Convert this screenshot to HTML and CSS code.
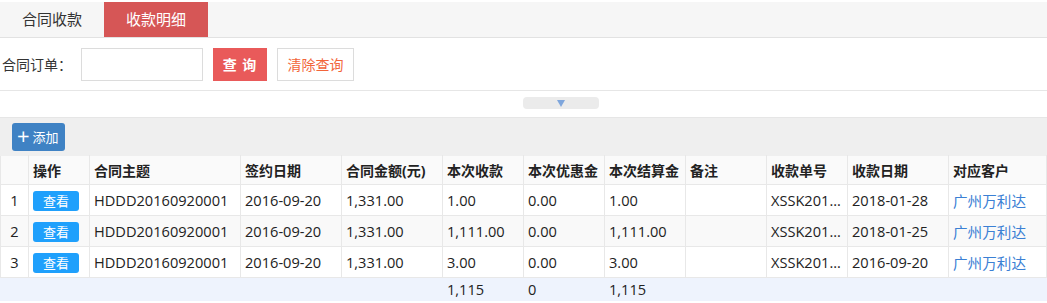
FILE: index.html
```html
<!DOCTYPE html>
<html lang="zh-CN">
<head>
  <meta charset="UTF-8">
  <title>收款明细</title>
  <link rel="stylesheet" href="styles.css">
</head>
<body>
  <div class="tabs">
    <span class="tab">合同收款</span>
    <span class="tab active">收款明细</span>
  </div>

  <div class="search">
    <label class="search-label">合同订单：</label>
    <input class="search-input" type="text">
    <button class="btn-query">查 询</button>
    <button class="btn-clear">清除查询</button>
  </div>

  <div class="collapse">
    <span class="collapse-handle"><span class="arrow"></span></span>
  </div>

  <div class="toolbar">
    <button class="btn-add"><span class="plus">+</span>添加</button>
  </div>

  <table class="grid">
    <colgroup>
      <col style="width:28px"><col style="width:61px"><col style="width:151px"><col style="width:101px">
      <col style="width:101px"><col style="width:81px"><col style="width:81px"><col style="width:81px">
      <col style="width:81px"><col style="width:81px"><col style="width:101px"><col>
    </colgroup>
    <thead>
      <tr>
        <th></th><th>操作</th><th>合同主题</th><th>签约日期</th><th>合同金额(元)</th><th>本次收款</th>
        <th>本次优惠金</th><th>本次结算金</th><th>备注</th><th>收款单号</th><th>收款日期</th><th>对应客户</th>
      </tr>
    </thead>
    <tbody>
      <tr>
        <td class="num">1</td><td><span class="btn-view">查看</span></td><td>HDDD20160920001</td><td>2016-09-20</td>
        <td>1,331.00</td><td>1.00</td><td>0.00</td><td>1.00</td><td></td><td>XSSK201...</td><td>2018-01-28</td>
        <td><a class="link" href="#">广州万利达</a></td>
      </tr>
      <tr class="alt">
        <td class="num">2</td><td><span class="btn-view">查看</span></td><td>HDDD20160920001</td><td>2016-09-20</td>
        <td>1,331.00</td><td>1,111.00</td><td>0.00</td><td>1,111.00</td><td></td><td>XSSK201...</td><td>2018-01-25</td>
        <td><a class="link" href="#">广州万利达</a></td>
      </tr>
      <tr>
        <td class="num">3</td><td><span class="btn-view">查看</span></td><td>HDDD20160920001</td><td>2016-09-20</td>
        <td>1,331.00</td><td>3.00</td><td>0.00</td><td>3.00</td><td></td><td>XSSK201...</td><td>2016-09-20</td>
        <td><a class="link" href="#">广州万利达</a></td>
      </tr>
    </tbody>
    <tfoot>
      <tr>
        <td></td><td></td><td></td><td></td><td></td><td>1,115</td><td>0</td><td>1,115</td><td></td><td></td><td></td><td></td>
      </tr>
    </tfoot>
  </table>
</body>
</html>
```

FILE: styles.css
```css
body {
  margin: 2px 0 0;
  font-family: 'Open Sans', 'Noto Sans CJK SC', sans-serif;
  font-size: 14px;
  color: #222;
  background: #fff;
}

.tabs {
  display: flex;
  height: 35px;
  background: #f6f6f6;
  border-bottom: 1px solid #e2e2e2;
}

.tab {
  width: 104px;
  line-height: 35px;
  text-align: center;
  font-size: 15px;
  color: #333;
}

.tab.active {
  background: #d65656;
  color: #fff;
}

.search {
  display: flex;
  align-items: center;
  height: 52px;
  border-bottom: 1px solid #e6e6e6;
}

.search-label {
  margin-left: 2px;
  width: 79px;
  color: #333;
}

.search-input {
  box-sizing: border-box;
  width: 122px;
  height: 33px;
  border: 1px solid #dcdcdc;
  margin: 0;
}

.btn-query {
  margin-left: 10px;
  width: 54px;
  height: 33px;
  border: 0;
  background: #e95a5a;
  color: #fff;
  font-family: inherit;
  font-size: 14px;
  font-weight: bold;
  letter-spacing: 1px;
}

.btn-clear {
  margin-left: 10px;
  width: 77px;
  height: 33px;
  border: 1px solid #dcdcdc;
  background: #fff;
  color: #f2653a;
  font-family: inherit;
  font-size: 14px;
}

.collapse {
  height: 26px;
  display: flex;
  justify-content: center;
  border-bottom: 1px solid #e6e6e6;
  padding-left: 74px;
}

.collapse-handle {
  margin-top: 6px;
  width: 76px;
  height: 12px;
  border-radius: 4px;
  background: #ebebeb;
  display: flex;
  justify-content: center;
  align-items: center;
}

.arrow {
  width: 0;
  height: 0;
  border-left: 4px solid transparent;
  border-right: 4px solid transparent;
  border-top: 7px solid #7fa6dc;
}

.toolbar {
  height: 37px;
  background: #efefef;
  display: flex;
  align-items: center;
  padding-left: 12px;
}

.btn-add {
  height: 28px;
  padding: 0 6px 0 5px;
  border: 0;
  border-radius: 3px;
  background: #3f82c4;
  color: #fff;
  font-family: inherit;
  font-size: 13px;
  display: flex;
  align-items: center;
}

.plus {
  font-size: 22px;
  line-height: 1;
  margin-right: 3px;
  margin-top: -3px;
}

.grid {
  width: 1047px;
  table-layout: fixed;
  border-collapse: collapse;
  font-size: 14.6px;
}

.grid th,
.grid td {
  border: 1px solid #e8e8e8;
  padding: 0 4px;
  text-align: left;
  white-space: nowrap;
  overflow: hidden;
}

.grid th {
  height: 28px;
  background: #fafafa;
  font-weight: bold;
  font-size: 14px;
  color: #222;
  border-top-color: #efefef;
}

.grid tbody td {
  height: 30px;
}

.grid tr.alt td {
  background: #f9f9f9;
}

.grid td.num {
  text-align: center;
  padding: 0;
}

.grid tfoot td {
  height: 22px;
  background: #eef3fd;
  border-color: #eef3fd;
}

.btn-view {
  display: inline-block;
  width: 46px;
  height: 20px;
  line-height: 20px;
  border-radius: 3px;
  background: #1fa0fc;
  color: #fff;
  font-size: 13px;
  text-align: center;
  vertical-align: middle;
}

.link {
  color: #3b80d4;
  text-decoration: none;
}
```
